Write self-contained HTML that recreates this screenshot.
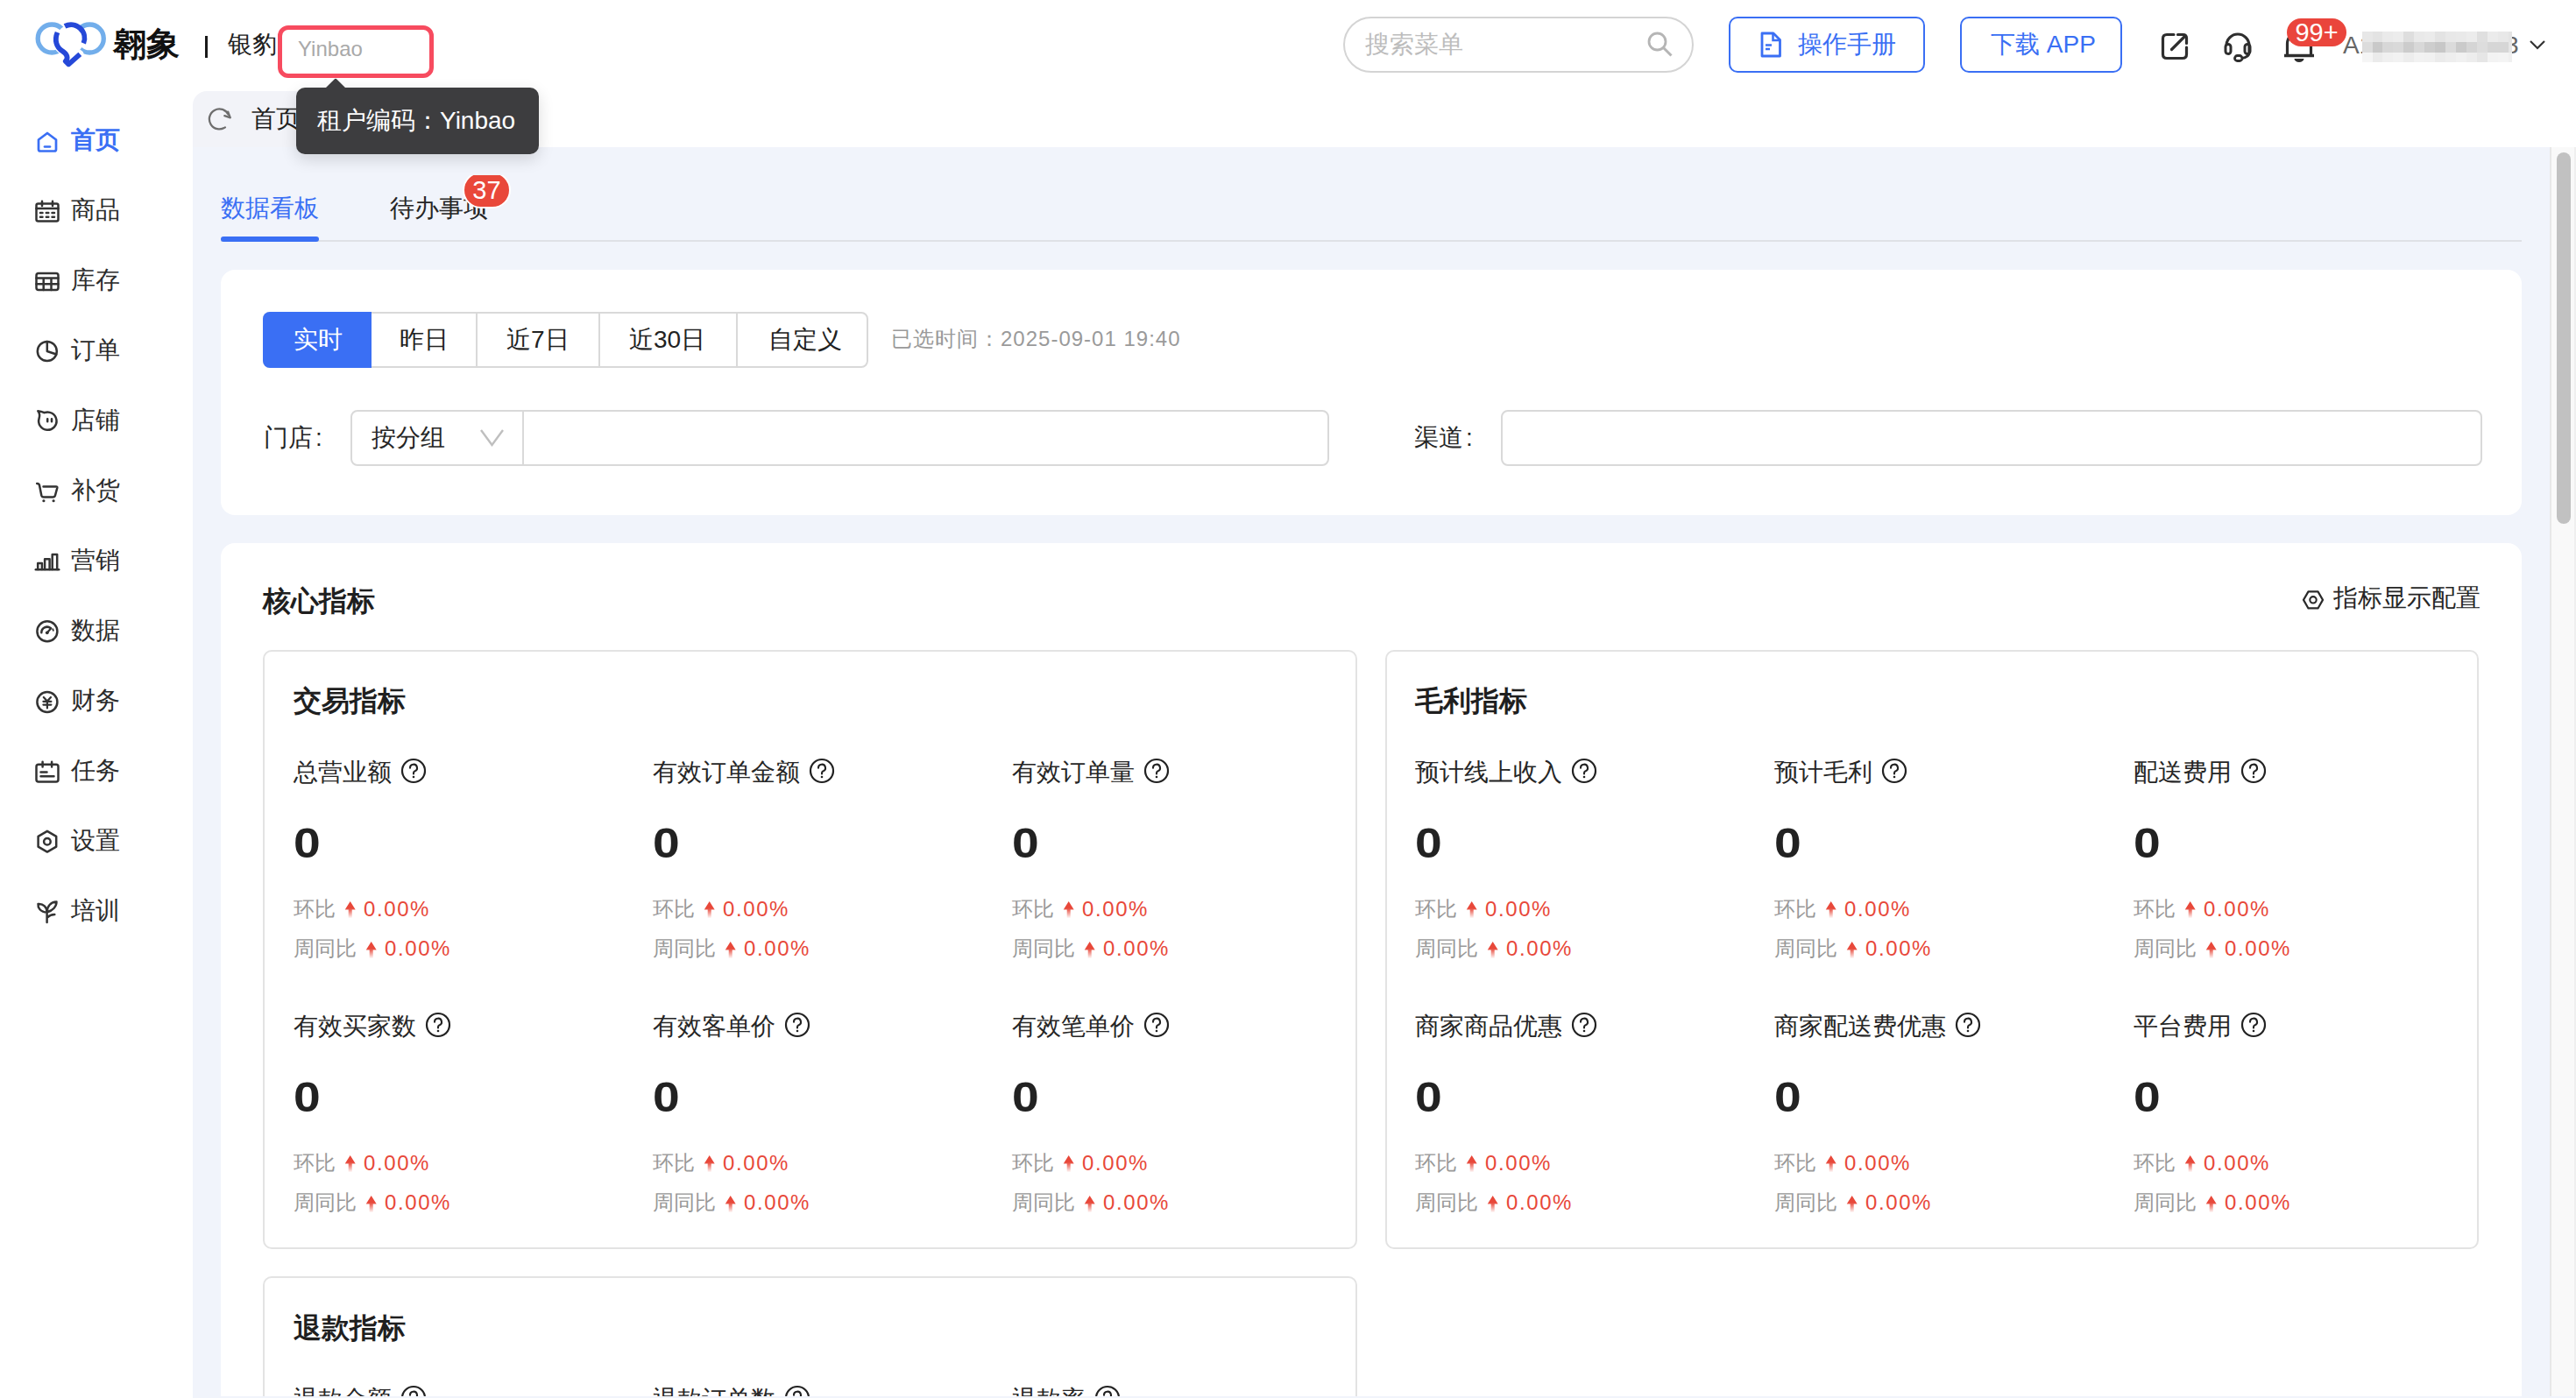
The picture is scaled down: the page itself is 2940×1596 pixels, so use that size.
<!DOCTYPE html>
<html><head><meta charset="utf-8">
<style>
*{box-sizing:border-box;margin:0;padding:0}
html,body{width:2940px;height:1596px;overflow:hidden;background:#fff;font-family:"Liberation Sans",sans-serif;color:#222}
.a{position:absolute;white-space:nowrap}
svg{position:absolute;overflow:visible}
/* sidebar */
.nav{position:absolute;left:0;width:220px;height:80px}
.nav .t{position:absolute;left:81px;top:0;font-size:28px;line-height:52px;color:#2b2b2b}
.nav svg{left:41px}
/* metric */
.lbl{font-size:28px;color:#262626;line-height:40px}
.val{font-size:48px;font-weight:700;color:#222;line-height:56px}
.cmp{font-size:24px;color:#999;line-height:30px}
.pct{color:#e8483a;letter-spacing:1.6px}
</style></head>
<body>
<!-- sidebar background -->
<div class="a" style="left:0;top:104px;width:220px;height:1492px;background:#fff"></div>
<!-- content bg -->
<div class="a" style="left:220px;top:168px;width:2691px;height:1428px;background:#f1f4fb"></div>
<!-- page tab strip -->
<div class="a" style="left:220px;top:104px;width:188px;height:64px;background:#f2f3f8;border-radius:16px 0 0 0"></div>

<!-- header -->
<svg style="left:36px;top:20px" width="90" height="60" viewBox="0 0 90 60">
  <circle cx="23.2" cy="24" r="16" fill="none" stroke="#72aeeb" stroke-width="5.3"/>
  <circle cx="66.3" cy="24" r="16" fill="none" stroke="#72aeeb" stroke-width="5.3"/>
  <circle cx="44.6" cy="24.4" r="16.2" fill="#fff"/>
  <path d="M27.5 20 C26.5 28 29 34 35.5 38.5 C41 42 42 46.5 38.8 50 L42.3 53.3 L55.3 41.8 Z" fill="#fff" stroke="#fff" stroke-width="8.5" stroke-linejoin="round"/>
  <path d="M38 9.9 A15.4 15.4 0 0 1 59.3 29.4" fill="none" stroke="#2548d8" stroke-width="5.8"/>
  <path d="M29.5 17 C26 25.5 28 34 35.5 38.5 C41 42 42 46.5 38.8 50 L42.3 53.3 L55.3 41.8" fill="none" stroke="#2548d8" stroke-width="5.8" stroke-linejoin="round"/>
</svg>
<div class="a" style="left:129px;top:24px;font-size:38px;font-weight:700;line-height:52px;color:#111">翱象</div>
<div class="a" style="left:234px;top:41px;width:3px;height:25px;background:#1a1a1a"></div>
<div class="a" style="left:260px;top:31px;font-size:28px;line-height:40px;color:#222">银豹</div>
<div class="a" style="left:317px;top:29px;width:178px;height:60px;border:5.5px solid #f74b5f;border-radius:12px;background:#fff"></div>
<div class="a" style="left:340px;top:38px;font-size:24px;line-height:36px;color:#a9a9a9">Yinbao</div>

<!-- search -->
<div class="a" style="left:1533px;top:19px;width:400px;height:64px;border:2px solid #d4d4d4;border-radius:32px"></div>
<div class="a" style="left:1558px;top:31px;font-size:28px;line-height:40px;color:#bdbdbd">搜索菜单</div>
<svg style="left:1880px;top:36px" width="30" height="30" viewBox="0 0 30 30"><circle cx="11.5" cy="11.5" r="9.5" fill="none" stroke="#b5b5b5" stroke-width="2.8"/><path d="M18.5 18.5 L27.5 27.5" stroke="#b5b5b5" stroke-width="3" stroke-linecap="butt"/></svg>

<!-- buttons -->
<div class="a" style="left:1973px;top:19px;width:224px;height:64px;border:2.5px solid #3a6ff4;border-radius:10px"></div>
<svg style="left:2009px;top:36px" width="24" height="30" viewBox="0 0 24 30"><path d="M2 2 H15 L22.5 9.5 V28 H2 Z" fill="none" stroke="#3a6ff4" stroke-width="2.8" stroke-linejoin="round"/><path d="M14.5 2 V10 H22.5" fill="none" stroke="#3a6ff4" stroke-width="2.5"/><path d="M6 15.5 H13 M6 20 H11" stroke="#3a6ff4" stroke-width="2.5"/></svg>
<div class="a" style="left:2052px;top:31px;font-size:28px;line-height:40px;color:#3a6ff4">操作手册</div>
<div class="a" style="left:2237px;top:19px;width:185px;height:64px;border:2.5px solid #3a6ff4;border-radius:10px"></div>
<div class="a" style="left:2272px;top:31px;font-size:28px;line-height:40px;color:#3a6ff4">下载 APP</div>

<!-- icons -->
<svg style="left:2466px;top:37px" width="32" height="32" viewBox="0 0 32 32"><path d="M15 2.5 H7 Q2.5 2.5 2.5 7 V25 Q2.5 29.5 7 29.5 H25 Q29.5 29.5 29.5 25 V17" fill="none" stroke="#2e2e2e" stroke-width="3.2" stroke-linecap="round"/><path d="M19.5 2.5 H25.5 Q29.5 2.5 29.5 6.5 V12.5" fill="none" stroke="#2e2e2e" stroke-width="3.2" stroke-linecap="round"/><path d="M12.5 19.5 L28 4" stroke="#2e2e2e" stroke-width="3.2" stroke-linecap="round"/></svg>
<svg style="left:2538px;top:35px" width="32" height="36" viewBox="0 0 32 36"><path d="M3 17 A13 13 0 0 1 29 17 V25" fill="none" stroke="#2e2e2e" stroke-width="3.2"/><rect x="2" y="15.5" width="6" height="11" rx="3" fill="none" stroke="#2e2e2e" stroke-width="3"/><rect x="24" y="15.5" width="6" height="11" rx="3" fill="none" stroke="#2e2e2e" stroke-width="3"/><path d="M29 25 Q29 30.5 20 31.5" fill="none" stroke="#2e2e2e" stroke-width="3"/><rect x="12.5" y="28.5" width="8.5" height="6" rx="3" fill="none" stroke="#2e2e2e" stroke-width="2.8"/></svg>
<svg style="left:2606px;top:36px" width="36" height="34" viewBox="0 0 36 34"><path d="M4.5 28 V14 A13.5 13.5 0 0 1 31.5 14 V28" fill="none" stroke="#2e2e2e" stroke-width="3.2"/><path d="M1 27.5 H35" stroke="#2e2e2e" stroke-width="3.4"/><path d="M12.5 31 A5.5 4 0 0 0 23.5 31 Z" fill="#2e2e2e"/></svg>
<div class="a" style="left:2610px;top:21px;width:68px;height:32px;border-radius:16px;background:#ea453c;color:#fff;font-size:29px;line-height:32px;text-align:center;letter-spacing:0px">99+</div>
<div class="a" style="left:2674px;top:32px;font-size:28px;line-height:40px;color:#666">A1</div>
<div class="a" style="left:2859px;top:32px;font-size:28px;line-height:40px;color:#666">3</div>
<div class="a" style="left:0;top:0"><div class="a" style="left:2696px;top:36px;width:12px;height:12px;background:#e7e7e7"></div><div class="a" style="left:2708px;top:36px;width:11px;height:12px;background:#e3e3e3"></div><div class="a" style="left:2719px;top:36px;width:12px;height:12px;background:#eaeaea"></div><div class="a" style="left:2731px;top:36px;width:12px;height:12px;background:#ececec"></div><div class="a" style="left:2743px;top:36px;width:12px;height:12px;background:#dedede"></div><div class="a" style="left:2755px;top:36px;width:12px;height:12px;background:#e9e9e9"></div><div class="a" style="left:2767px;top:36px;width:12px;height:12px;background:#ebebeb"></div><div class="a" style="left:2779px;top:36px;width:12px;height:12px;background:#e3e3e3"></div><div class="a" style="left:2791px;top:36px;width:12px;height:12px;background:#e8e8e8"></div><div class="a" style="left:2803px;top:36px;width:12px;height:12px;background:#e9e9e9"></div><div class="a" style="left:2815px;top:36px;width:12px;height:12px;background:#ececec"></div><div class="a" style="left:2827px;top:36px;width:12px;height:12px;background:#dfdfdf"></div><div class="a" style="left:2839px;top:36px;width:12px;height:12px;background:#ebebeb"></div><div class="a" style="left:2851px;top:36px;width:12px;height:12px;background:#e8e8e8"></div><div class="a" style="left:2863px;top:36px;width:4px;height:12px;background:#e4e4e4"></div><div class="a" style="left:2696px;top:48px;width:12px;height:12px;background:#dcdcdc"></div><div class="a" style="left:2708px;top:48px;width:11px;height:12px;background:#c9c9c9"></div><div class="a" style="left:2719px;top:48px;width:12px;height:12px;background:#d7d7d7"></div><div class="a" style="left:2731px;top:48px;width:12px;height:12px;background:#d9d9d9"></div><div class="a" style="left:2743px;top:48px;width:12px;height:12px;background:#cccccc"></div><div class="a" style="left:2755px;top:48px;width:12px;height:12px;background:#d8d8d8"></div><div class="a" style="left:2767px;top:48px;width:12px;height:12px;background:#cdcdcd"></div><div class="a" style="left:2779px;top:48px;width:12px;height:12px;background:#c7c7c7"></div><div class="a" style="left:2791px;top:48px;width:12px;height:12px;background:#dbdbdb"></div><div class="a" style="left:2803px;top:48px;width:12px;height:12px;background:#cacaca"></div><div class="a" style="left:2815px;top:48px;width:12px;height:12px;background:#d5d5d5"></div><div class="a" style="left:2827px;top:48px;width:12px;height:12px;background:#dddddd"></div><div class="a" style="left:2839px;top:48px;width:12px;height:12px;background:#d6d6d6"></div><div class="a" style="left:2851px;top:48px;width:12px;height:12px;background:#d6d6d6"></div><div class="a" style="left:2863px;top:48px;width:4px;height:12px;background:#e6e6e6"></div><div class="a" style="left:2696px;top:60px;width:12px;height:11px;background:#f5f5f5"></div><div class="a" style="left:2708px;top:60px;width:11px;height:11px;background:#ebebeb"></div><div class="a" style="left:2719px;top:60px;width:12px;height:11px;background:#f0f0f0"></div><div class="a" style="left:2731px;top:60px;width:12px;height:11px;background:#f2f2f2"></div><div class="a" style="left:2743px;top:60px;width:12px;height:11px;background:#ededed"></div><div class="a" style="left:2755px;top:60px;width:12px;height:11px;background:#f2f2f2"></div><div class="a" style="left:2767px;top:60px;width:12px;height:11px;background:#f1f1f1"></div><div class="a" style="left:2779px;top:60px;width:12px;height:11px;background:#ebebeb"></div><div class="a" style="left:2791px;top:60px;width:12px;height:11px;background:#eeeeee"></div><div class="a" style="left:2803px;top:60px;width:12px;height:11px;background:#f1f1f1"></div><div class="a" style="left:2815px;top:60px;width:12px;height:11px;background:#ededed"></div><div class="a" style="left:2827px;top:60px;width:12px;height:11px;background:#e6e6e6"></div><div class="a" style="left:2839px;top:60px;width:12px;height:11px;background:#f3f3f3"></div><div class="a" style="left:2851px;top:60px;width:12px;height:11px;background:#f4f4f4"></div><div class="a" style="left:2863px;top:60px;width:4px;height:11px;background:#f0f0f0"></div></div>

<svg style="left:2886px;top:45px" width="20" height="12" viewBox="0 0 20 12"><path d="M2 2 L10 10 L18 2" fill="none" stroke="#333" stroke-width="2.2"/></svg>

<!-- sidebar -->
<div class="a" style="left:81px;top:140px;font-size:28px;line-height:40px;color:#3a6ff4;font-weight:600;">首页</div>
<div class="a" style="left:81px;top:220px;font-size:28px;line-height:40px;color:#2b2b2b;">商品</div>
<div class="a" style="left:81px;top:300px;font-size:28px;line-height:40px;color:#2b2b2b;">库存</div>
<div class="a" style="left:81px;top:380px;font-size:28px;line-height:40px;color:#2b2b2b;">订单</div>
<div class="a" style="left:81px;top:460px;font-size:28px;line-height:40px;color:#2b2b2b;">店铺</div>
<div class="a" style="left:81px;top:540px;font-size:28px;line-height:40px;color:#2b2b2b;">补货</div>
<div class="a" style="left:81px;top:620px;font-size:28px;line-height:40px;color:#2b2b2b;">营销</div>
<div class="a" style="left:81px;top:700px;font-size:28px;line-height:40px;color:#2b2b2b;">数据</div>
<div class="a" style="left:81px;top:780px;font-size:28px;line-height:40px;color:#2b2b2b;">财务</div>
<div class="a" style="left:81px;top:860px;font-size:28px;line-height:40px;color:#2b2b2b;">任务</div>
<div class="a" style="left:81px;top:940px;font-size:28px;line-height:40px;color:#2b2b2b;">设置</div>
<div class="a" style="left:81px;top:1020px;font-size:28px;line-height:40px;color:#2b2b2b;">培训</div>
<svg style="left:0;top:0" width="220" height="1100" viewBox="0 0 220 1100">
<g fill="none" stroke="#3a6ff4" stroke-width="2.7" stroke-linejoin="round" stroke-linecap="round">
 <path d="M44 159.5 L54 152 L64 159.5 V170.5 Q64 172.5 62 172.5 H46 Q44 172.5 44 170.5 Z"/>
 <path d="M51 167.5 H57"/>
</g>
<g fill="none" stroke="#333" stroke-width="2.5" stroke-linejoin="round" stroke-linecap="round">
 <rect x="41.5" y="232.5" width="25" height="20" rx="2"/>
 <path d="M41.5 238 H66.5 M48 229.8 V235 M60 229.8 V235"/>
 <path d="M46 243 H48.5 M52.8 243 H55.3 M59.5 243 H62 M46 247.7 H48.5 M52.8 247.7 H55.3 M59.5 247.7 H62"/>
 <rect x="41.5" y="312" width="25" height="19" rx="2.5"/>
 <path d="M41.5 317.5 H66.5 M41.5 324.3 H66.5 M49.7 317.5 V331 M58.5 317.5 V331"/>
 <circle cx="53.8" cy="401" r="11"/>
 <path d="M53.8 390 V401 L64.3 404.5"/>
 <path d="M50.5 471.2 A10.2 10.2 0 1 1 44.6 477.6 C45.6 474.6 45.2 471.6 43.3 469.2 Q47 469.4 50.5 471.2 Z"/>
 <path d="M54.2 478.2 V481.2 M59 478.2 V481.2"/>
 <path d="M42.2 552 Q44.6 552 45 554 L47.3 565.5 Q47.8 567.5 49.8 567.5 H60.5 Q62.5 567.5 63 565.5 L65.3 557 Q65.6 555.5 64 555.5 H49.5"/>
 <path d="M49.8 571.8 H50 M61 571.8 H61.2" stroke-width="3"/>
 <path d="M40.8 650.2 H67.2"/>
 <path d="M43.2 650 V643 H47.9 V650 M51.1 650 V638.2 H56.6 V650 M59.7 650 V633 H65.2 V650"/>
 <circle cx="53.9" cy="720.8" r="11.5"/>
 <path d="M47.3 722.3 A6.6 6.6 0 0 1 57.7 716.9"/>
 <path d="M53.8 722.3 L58.3 717.3" stroke-width="2.2"/>
 <circle cx="53.8" cy="722.3" r="1.9" fill="#333" stroke="none"/>
 <path d="M60.2 718.2 L60.9 719.8" stroke-width="1.8"/>
 <circle cx="53.9" cy="801.4" r="11.5"/>
 <path d="M49.8 796 L53.9 800.6 L58 796 M49.4 800.8 H58.4 M49.4 804.6 H58.4 M53.9 800.6 V808.5" stroke-width="2.2"/>
 <rect x="41.5" y="872.8" width="25" height="19.8" rx="2.5"/>
 <path d="M48.6 869.8 V875.5 M59.1 869.8 V875.5 M46.5 881.4 H53.5 M46.5 886.3 H61.5"/>
 <path d="M53.9 948.8 L64.2 954.8 V966.6 L53.9 972.6 L43.6 966.6 V954.8 Z"/>
 <circle cx="53.9" cy="960.7" r="3.8"/>
 <path d="M53.6 1053 V1041.5 M53.6 1041.5 C46 1041.5 43 1036 43.5 1032 C49.5 1031.5 53.6 1035.5 53.6 1041.5 M53.6 1041.5 C53.6 1034.5 58 1029.8 64.5 1029.5 C64.5 1035 60 1039.5 53.6 1041.5 M54.5 1047 C56.5 1045 59 1044.2 62.3 1044"/>
</g>
</svg>

<!-- breadcrumb tab -->
<svg style="left:236px;top:122px" width="30" height="28" viewBox="0 0 30 28"><path d="M24.6 8.6 A11.5 11.5 0 1 0 20.9 23.4" fill="none" stroke="#6e6e6e" stroke-width="2.3" stroke-linecap="round"/><path d="M24.2 5.6 L26.8 12.3 L20.3 10.2" fill="none" stroke="#6e6e6e" stroke-width="2.3" stroke-linecap="round" stroke-linejoin="round"/></svg>
<div class="a" style="left:287px;top:116px;font-size:28px;line-height:40px;color:#1f1f1f;font-weight:500">首页</div>

<!-- tabs -->
<div class="a" style="left:252px;top:274px;width:2626px;height:2px;background:#dfe1e6"></div>
<div class="a" style="left:252px;top:218px;font-size:28px;line-height:40px;color:#3a6ff4">数据看板</div>
<div class="a" style="left:252px;top:270px;width:112px;height:6px;border-radius:3px;background:#3a6ff4"></div>
<div class="a" style="left:445px;top:218px;font-size:28px;line-height:40px;color:#262626">待办事项</div>
<div class="a" style="left:520px;top:200px;width:80px;height:50px;overflow:hidden"><div class="a" style="left:8px;top:-4px;width:55px;height:42px;border-radius:21px;background:#e9483a;border:2.5px solid #fff;color:#fff;font-size:29px;line-height:38px;text-align:center">37</div></div>

<!-- filter card -->
<div class="a" style="left:252px;top:308px;width:2626px;height:280px;background:#fff;border-radius:16px"></div>
<div class="a" style="left:300px;top:356px;width:691px;height:64px;border:2px solid #d9d9d9;border-radius:8px"></div>
<div class="a" style="left:300px;top:356px;width:124px;height:64px;background:#3a6ff4;border-radius:8px 0 0 8px"></div>
<div class="a" style="left:543px;top:358px;width:2px;height:60px;background:#d9d9d9"></div>
<div class="a" style="left:683px;top:358px;width:2px;height:60px;background:#d9d9d9"></div>
<div class="a" style="left:840px;top:358px;width:2px;height:60px;background:#d9d9d9"></div>
<div class="a" style="left:335px;top:368px;font-size:28px;line-height:40px;color:#fff">实时</div>
<div class="a" style="left:456px;top:368px;font-size:28px;line-height:40px;color:#222">昨日</div>
<div class="a" style="left:578px;top:368px;font-size:28px;line-height:40px;color:#222">近7日</div>
<div class="a" style="left:718px;top:368px;font-size:28px;line-height:40px;color:#222">近30日</div>
<div class="a" style="left:877px;top:368px;font-size:28px;line-height:40px;color:#222">自定义</div>
<div class="a" style="left:1017px;top:370px;font-size:24px;line-height:34px;color:#9a9a9a;letter-spacing:1px">已选时间：2025-09-01 19:40</div>

<div class="a" style="left:301px;top:480px;font-size:28px;line-height:40px;color:#262626">门店<span style="margin-left:3px">:</span></div>
<div class="a" style="left:400px;top:468px;width:1117px;height:64px;border:2px solid #d9d9d9;border-radius:8px"></div>
<div class="a" style="left:596px;top:470px;width:2px;height:60px;background:#d9d9d9"></div>
<div class="a" style="left:424px;top:480px;font-size:28px;line-height:40px;color:#262626">按分组</div>
<svg style="left:546px;top:488px" width="32" height="24" viewBox="0 0 32 24"><path d="M3 3 L15.5 20 L28 3" fill="none" stroke="#bfbfbf" stroke-width="2.4"/></svg>
<div class="a" style="left:1614px;top:480px;font-size:28px;line-height:40px;color:#262626">渠道<span style="margin-left:3px">:</span></div>
<div class="a" style="left:1713px;top:468px;width:1120px;height:64px;border:2px solid #d9d9d9;border-radius:8px"></div>

<!-- core metrics card -->
<div class="a" style="left:252px;top:620px;width:2626px;height:1000px;background:#fff;border-radius:16px"></div>
<div class="a" style="left:300px;top:664px;font-size:32px;line-height:44px;color:#1f1f1f;font-weight:600">核心指标</div>
<svg style="left:2626px;top:670px" width="28" height="30" viewBox="0 0 28 30"><path d="M25.00 14.90 L19.50 24.43 L8.50 24.43 L3.00 14.90 L8.50 5.37 L19.50 5.37 Z" fill="none" stroke="#2a2a2a" stroke-width="2.2" stroke-linejoin="round"/><circle cx="14" cy="14.8" r="3.7" fill="none" stroke="#2a2a2a" stroke-width="2.1"/></svg>
<div class="a" style="left:2663px;top:663px;font-size:28px;line-height:40px;color:#262626">指标显示配置</div>

<div class="a" style="left:300px;top:742px;width:1249px;height:684px;border:2px solid #e3e3e3;border-radius:10px"></div>
<div class="a" style="left:1581px;top:742px;width:1248px;height:684px;border:2px solid #e3e3e3;border-radius:10px"></div>
<div class="a" style="left:300px;top:1457px;width:1249px;height:400px;border:2px solid #e3e3e3;border-radius:10px"></div>
<div class="a" style="left:335px;top:778px;font-size:32px;line-height:44px;color:#1f1f1f;font-weight:600">交易指标</div>
<div class="a" style="left:1615px;top:778px;font-size:32px;line-height:44px;color:#1f1f1f;font-weight:600">毛利指标</div>
<div class="a" style="left:335px;top:1494px;font-size:32px;line-height:44px;color:#1f1f1f;font-weight:600">退款指标</div>

<!-- metrics -->
<svg width="0" height="0" style="position:absolute"><defs><linearGradient id="ag" x1="0" y1="0" x2="0" y2="1"><stop offset="0.4" stop-color="#e8483a"/><stop offset="0.5" stop-color="#e8483a" stop-opacity="0.85"/><stop offset="1" stop-color="#e8483a" stop-opacity="0"/></linearGradient></defs></svg>
<div class="a lbl" style="left:335px;top:862px">总营业额</div><svg style="left:457px;top:865px" width="30" height="30" viewBox="0 0 30 30"><circle cx="15" cy="15" r="13" fill="none" stroke="#222" stroke-width="2.2"/><path d="M11 11.8 A4 4 0 1 1 16.2 15.5 Q15 16 15 17.5 V18.5" fill="none" stroke="#222" stroke-width="2.1" stroke-linecap="round"/><circle cx="15" cy="22" r="1.3" fill="#222"/></svg><div class="a val" style="left:335px;top:935px;transform:scaleX(1.15);transform-origin:0 0">0</div><div class="a cmp" style="left:335px;top:1022.6px">环比</div><svg style="left:393px;top:1029px" width="14" height="20" viewBox="0 0 14 20"><path d="M6.7 0 L12.7 9.6 H8.7 V19.4 H4.7 V9.6 H0.7 Z" fill="url(#ag)"/></svg><div class="a cmp pct" style="left:415px;top:1022.6px">0.00%</div><div class="a cmp" style="left:335px;top:1068px">周同比</div><svg style="left:417px;top:1075px" width="14" height="20" viewBox="0 0 14 20"><path d="M6.7 0 L12.7 9.6 H8.7 V19.4 H4.7 V9.6 H0.7 Z" fill="url(#ag)"/></svg><div class="a cmp pct" style="left:439px;top:1068px">0.00%</div>
<div class="a lbl" style="left:745px;top:862px">有效订单金额</div><svg style="left:923px;top:865px" width="30" height="30" viewBox="0 0 30 30"><circle cx="15" cy="15" r="13" fill="none" stroke="#222" stroke-width="2.2"/><path d="M11 11.8 A4 4 0 1 1 16.2 15.5 Q15 16 15 17.5 V18.5" fill="none" stroke="#222" stroke-width="2.1" stroke-linecap="round"/><circle cx="15" cy="22" r="1.3" fill="#222"/></svg><div class="a val" style="left:745px;top:935px;transform:scaleX(1.15);transform-origin:0 0">0</div><div class="a cmp" style="left:745px;top:1022.6px">环比</div><svg style="left:803px;top:1029px" width="14" height="20" viewBox="0 0 14 20"><path d="M6.7 0 L12.7 9.6 H8.7 V19.4 H4.7 V9.6 H0.7 Z" fill="url(#ag)"/></svg><div class="a cmp pct" style="left:825px;top:1022.6px">0.00%</div><div class="a cmp" style="left:745px;top:1068px">周同比</div><svg style="left:827px;top:1075px" width="14" height="20" viewBox="0 0 14 20"><path d="M6.7 0 L12.7 9.6 H8.7 V19.4 H4.7 V9.6 H0.7 Z" fill="url(#ag)"/></svg><div class="a cmp pct" style="left:849px;top:1068px">0.00%</div>
<div class="a lbl" style="left:1155px;top:862px">有效订单量</div><svg style="left:1305px;top:865px" width="30" height="30" viewBox="0 0 30 30"><circle cx="15" cy="15" r="13" fill="none" stroke="#222" stroke-width="2.2"/><path d="M11 11.8 A4 4 0 1 1 16.2 15.5 Q15 16 15 17.5 V18.5" fill="none" stroke="#222" stroke-width="2.1" stroke-linecap="round"/><circle cx="15" cy="22" r="1.3" fill="#222"/></svg><div class="a val" style="left:1155px;top:935px;transform:scaleX(1.15);transform-origin:0 0">0</div><div class="a cmp" style="left:1155px;top:1022.6px">环比</div><svg style="left:1213px;top:1029px" width="14" height="20" viewBox="0 0 14 20"><path d="M6.7 0 L12.7 9.6 H8.7 V19.4 H4.7 V9.6 H0.7 Z" fill="url(#ag)"/></svg><div class="a cmp pct" style="left:1235px;top:1022.6px">0.00%</div><div class="a cmp" style="left:1155px;top:1068px">周同比</div><svg style="left:1237px;top:1075px" width="14" height="20" viewBox="0 0 14 20"><path d="M6.7 0 L12.7 9.6 H8.7 V19.4 H4.7 V9.6 H0.7 Z" fill="url(#ag)"/></svg><div class="a cmp pct" style="left:1259px;top:1068px">0.00%</div>
<div class="a lbl" style="left:1615px;top:862px">预计线上收入</div><svg style="left:1793px;top:865px" width="30" height="30" viewBox="0 0 30 30"><circle cx="15" cy="15" r="13" fill="none" stroke="#222" stroke-width="2.2"/><path d="M11 11.8 A4 4 0 1 1 16.2 15.5 Q15 16 15 17.5 V18.5" fill="none" stroke="#222" stroke-width="2.1" stroke-linecap="round"/><circle cx="15" cy="22" r="1.3" fill="#222"/></svg><div class="a val" style="left:1615px;top:935px;transform:scaleX(1.15);transform-origin:0 0">0</div><div class="a cmp" style="left:1615px;top:1022.6px">环比</div><svg style="left:1673px;top:1029px" width="14" height="20" viewBox="0 0 14 20"><path d="M6.7 0 L12.7 9.6 H8.7 V19.4 H4.7 V9.6 H0.7 Z" fill="url(#ag)"/></svg><div class="a cmp pct" style="left:1695px;top:1022.6px">0.00%</div><div class="a cmp" style="left:1615px;top:1068px">周同比</div><svg style="left:1697px;top:1075px" width="14" height="20" viewBox="0 0 14 20"><path d="M6.7 0 L12.7 9.6 H8.7 V19.4 H4.7 V9.6 H0.7 Z" fill="url(#ag)"/></svg><div class="a cmp pct" style="left:1719px;top:1068px">0.00%</div>
<div class="a lbl" style="left:2025px;top:862px">预计毛利</div><svg style="left:2147px;top:865px" width="30" height="30" viewBox="0 0 30 30"><circle cx="15" cy="15" r="13" fill="none" stroke="#222" stroke-width="2.2"/><path d="M11 11.8 A4 4 0 1 1 16.2 15.5 Q15 16 15 17.5 V18.5" fill="none" stroke="#222" stroke-width="2.1" stroke-linecap="round"/><circle cx="15" cy="22" r="1.3" fill="#222"/></svg><div class="a val" style="left:2025px;top:935px;transform:scaleX(1.15);transform-origin:0 0">0</div><div class="a cmp" style="left:2025px;top:1022.6px">环比</div><svg style="left:2083px;top:1029px" width="14" height="20" viewBox="0 0 14 20"><path d="M6.7 0 L12.7 9.6 H8.7 V19.4 H4.7 V9.6 H0.7 Z" fill="url(#ag)"/></svg><div class="a cmp pct" style="left:2105px;top:1022.6px">0.00%</div><div class="a cmp" style="left:2025px;top:1068px">周同比</div><svg style="left:2107px;top:1075px" width="14" height="20" viewBox="0 0 14 20"><path d="M6.7 0 L12.7 9.6 H8.7 V19.4 H4.7 V9.6 H0.7 Z" fill="url(#ag)"/></svg><div class="a cmp pct" style="left:2129px;top:1068px">0.00%</div>
<div class="a lbl" style="left:2435px;top:862px">配送费用</div><svg style="left:2557px;top:865px" width="30" height="30" viewBox="0 0 30 30"><circle cx="15" cy="15" r="13" fill="none" stroke="#222" stroke-width="2.2"/><path d="M11 11.8 A4 4 0 1 1 16.2 15.5 Q15 16 15 17.5 V18.5" fill="none" stroke="#222" stroke-width="2.1" stroke-linecap="round"/><circle cx="15" cy="22" r="1.3" fill="#222"/></svg><div class="a val" style="left:2435px;top:935px;transform:scaleX(1.15);transform-origin:0 0">0</div><div class="a cmp" style="left:2435px;top:1022.6px">环比</div><svg style="left:2493px;top:1029px" width="14" height="20" viewBox="0 0 14 20"><path d="M6.7 0 L12.7 9.6 H8.7 V19.4 H4.7 V9.6 H0.7 Z" fill="url(#ag)"/></svg><div class="a cmp pct" style="left:2515px;top:1022.6px">0.00%</div><div class="a cmp" style="left:2435px;top:1068px">周同比</div><svg style="left:2517px;top:1075px" width="14" height="20" viewBox="0 0 14 20"><path d="M6.7 0 L12.7 9.6 H8.7 V19.4 H4.7 V9.6 H0.7 Z" fill="url(#ag)"/></svg><div class="a cmp pct" style="left:2539px;top:1068px">0.00%</div>
<div class="a lbl" style="left:335px;top:1152px">有效买家数</div><svg style="left:485px;top:1155px" width="30" height="30" viewBox="0 0 30 30"><circle cx="15" cy="15" r="13" fill="none" stroke="#222" stroke-width="2.2"/><path d="M11 11.8 A4 4 0 1 1 16.2 15.5 Q15 16 15 17.5 V18.5" fill="none" stroke="#222" stroke-width="2.1" stroke-linecap="round"/><circle cx="15" cy="22" r="1.3" fill="#222"/></svg><div class="a val" style="left:335px;top:1225px;transform:scaleX(1.15);transform-origin:0 0">0</div><div class="a cmp" style="left:335px;top:1312.6px">环比</div><svg style="left:393px;top:1319px" width="14" height="20" viewBox="0 0 14 20"><path d="M6.7 0 L12.7 9.6 H8.7 V19.4 H4.7 V9.6 H0.7 Z" fill="url(#ag)"/></svg><div class="a cmp pct" style="left:415px;top:1312.6px">0.00%</div><div class="a cmp" style="left:335px;top:1358px">周同比</div><svg style="left:417px;top:1365px" width="14" height="20" viewBox="0 0 14 20"><path d="M6.7 0 L12.7 9.6 H8.7 V19.4 H4.7 V9.6 H0.7 Z" fill="url(#ag)"/></svg><div class="a cmp pct" style="left:439px;top:1358px">0.00%</div>
<div class="a lbl" style="left:745px;top:1152px">有效客单价</div><svg style="left:895px;top:1155px" width="30" height="30" viewBox="0 0 30 30"><circle cx="15" cy="15" r="13" fill="none" stroke="#222" stroke-width="2.2"/><path d="M11 11.8 A4 4 0 1 1 16.2 15.5 Q15 16 15 17.5 V18.5" fill="none" stroke="#222" stroke-width="2.1" stroke-linecap="round"/><circle cx="15" cy="22" r="1.3" fill="#222"/></svg><div class="a val" style="left:745px;top:1225px;transform:scaleX(1.15);transform-origin:0 0">0</div><div class="a cmp" style="left:745px;top:1312.6px">环比</div><svg style="left:803px;top:1319px" width="14" height="20" viewBox="0 0 14 20"><path d="M6.7 0 L12.7 9.6 H8.7 V19.4 H4.7 V9.6 H0.7 Z" fill="url(#ag)"/></svg><div class="a cmp pct" style="left:825px;top:1312.6px">0.00%</div><div class="a cmp" style="left:745px;top:1358px">周同比</div><svg style="left:827px;top:1365px" width="14" height="20" viewBox="0 0 14 20"><path d="M6.7 0 L12.7 9.6 H8.7 V19.4 H4.7 V9.6 H0.7 Z" fill="url(#ag)"/></svg><div class="a cmp pct" style="left:849px;top:1358px">0.00%</div>
<div class="a lbl" style="left:1155px;top:1152px">有效笔单价</div><svg style="left:1305px;top:1155px" width="30" height="30" viewBox="0 0 30 30"><circle cx="15" cy="15" r="13" fill="none" stroke="#222" stroke-width="2.2"/><path d="M11 11.8 A4 4 0 1 1 16.2 15.5 Q15 16 15 17.5 V18.5" fill="none" stroke="#222" stroke-width="2.1" stroke-linecap="round"/><circle cx="15" cy="22" r="1.3" fill="#222"/></svg><div class="a val" style="left:1155px;top:1225px;transform:scaleX(1.15);transform-origin:0 0">0</div><div class="a cmp" style="left:1155px;top:1312.6px">环比</div><svg style="left:1213px;top:1319px" width="14" height="20" viewBox="0 0 14 20"><path d="M6.7 0 L12.7 9.6 H8.7 V19.4 H4.7 V9.6 H0.7 Z" fill="url(#ag)"/></svg><div class="a cmp pct" style="left:1235px;top:1312.6px">0.00%</div><div class="a cmp" style="left:1155px;top:1358px">周同比</div><svg style="left:1237px;top:1365px" width="14" height="20" viewBox="0 0 14 20"><path d="M6.7 0 L12.7 9.6 H8.7 V19.4 H4.7 V9.6 H0.7 Z" fill="url(#ag)"/></svg><div class="a cmp pct" style="left:1259px;top:1358px">0.00%</div>
<div class="a lbl" style="left:1615px;top:1152px">商家商品优惠</div><svg style="left:1793px;top:1155px" width="30" height="30" viewBox="0 0 30 30"><circle cx="15" cy="15" r="13" fill="none" stroke="#222" stroke-width="2.2"/><path d="M11 11.8 A4 4 0 1 1 16.2 15.5 Q15 16 15 17.5 V18.5" fill="none" stroke="#222" stroke-width="2.1" stroke-linecap="round"/><circle cx="15" cy="22" r="1.3" fill="#222"/></svg><div class="a val" style="left:1615px;top:1225px;transform:scaleX(1.15);transform-origin:0 0">0</div><div class="a cmp" style="left:1615px;top:1312.6px">环比</div><svg style="left:1673px;top:1319px" width="14" height="20" viewBox="0 0 14 20"><path d="M6.7 0 L12.7 9.6 H8.7 V19.4 H4.7 V9.6 H0.7 Z" fill="url(#ag)"/></svg><div class="a cmp pct" style="left:1695px;top:1312.6px">0.00%</div><div class="a cmp" style="left:1615px;top:1358px">周同比</div><svg style="left:1697px;top:1365px" width="14" height="20" viewBox="0 0 14 20"><path d="M6.7 0 L12.7 9.6 H8.7 V19.4 H4.7 V9.6 H0.7 Z" fill="url(#ag)"/></svg><div class="a cmp pct" style="left:1719px;top:1358px">0.00%</div>
<div class="a lbl" style="left:2025px;top:1152px">商家配送费优惠</div><svg style="left:2231px;top:1155px" width="30" height="30" viewBox="0 0 30 30"><circle cx="15" cy="15" r="13" fill="none" stroke="#222" stroke-width="2.2"/><path d="M11 11.8 A4 4 0 1 1 16.2 15.5 Q15 16 15 17.5 V18.5" fill="none" stroke="#222" stroke-width="2.1" stroke-linecap="round"/><circle cx="15" cy="22" r="1.3" fill="#222"/></svg><div class="a val" style="left:2025px;top:1225px;transform:scaleX(1.15);transform-origin:0 0">0</div><div class="a cmp" style="left:2025px;top:1312.6px">环比</div><svg style="left:2083px;top:1319px" width="14" height="20" viewBox="0 0 14 20"><path d="M6.7 0 L12.7 9.6 H8.7 V19.4 H4.7 V9.6 H0.7 Z" fill="url(#ag)"/></svg><div class="a cmp pct" style="left:2105px;top:1312.6px">0.00%</div><div class="a cmp" style="left:2025px;top:1358px">周同比</div><svg style="left:2107px;top:1365px" width="14" height="20" viewBox="0 0 14 20"><path d="M6.7 0 L12.7 9.6 H8.7 V19.4 H4.7 V9.6 H0.7 Z" fill="url(#ag)"/></svg><div class="a cmp pct" style="left:2129px;top:1358px">0.00%</div>
<div class="a lbl" style="left:2435px;top:1152px">平台费用</div><svg style="left:2557px;top:1155px" width="30" height="30" viewBox="0 0 30 30"><circle cx="15" cy="15" r="13" fill="none" stroke="#222" stroke-width="2.2"/><path d="M11 11.8 A4 4 0 1 1 16.2 15.5 Q15 16 15 17.5 V18.5" fill="none" stroke="#222" stroke-width="2.1" stroke-linecap="round"/><circle cx="15" cy="22" r="1.3" fill="#222"/></svg><div class="a val" style="left:2435px;top:1225px;transform:scaleX(1.15);transform-origin:0 0">0</div><div class="a cmp" style="left:2435px;top:1312.6px">环比</div><svg style="left:2493px;top:1319px" width="14" height="20" viewBox="0 0 14 20"><path d="M6.7 0 L12.7 9.6 H8.7 V19.4 H4.7 V9.6 H0.7 Z" fill="url(#ag)"/></svg><div class="a cmp pct" style="left:2515px;top:1312.6px">0.00%</div><div class="a cmp" style="left:2435px;top:1358px">周同比</div><svg style="left:2517px;top:1365px" width="14" height="20" viewBox="0 0 14 20"><path d="M6.7 0 L12.7 9.6 H8.7 V19.4 H4.7 V9.6 H0.7 Z" fill="url(#ag)"/></svg><div class="a cmp pct" style="left:2539px;top:1358px">0.00%</div>
<div class="a lbl" style="left:335px;top:1578px">退款金额</div><svg style="left:457px;top:1581px" width="30" height="30" viewBox="0 0 30 30"><circle cx="15" cy="15" r="13" fill="none" stroke="#222" stroke-width="2.2"/><path d="M11 11.8 A4 4 0 1 1 16.2 15.5 Q15 16 15 17.5 V18.5" fill="none" stroke="#222" stroke-width="2.1" stroke-linecap="round"/><circle cx="15" cy="22" r="1.3" fill="#222"/></svg>
<div class="a lbl" style="left:745px;top:1578px">退款订单数</div><svg style="left:895px;top:1581px" width="30" height="30" viewBox="0 0 30 30"><circle cx="15" cy="15" r="13" fill="none" stroke="#222" stroke-width="2.2"/><path d="M11 11.8 A4 4 0 1 1 16.2 15.5 Q15 16 15 17.5 V18.5" fill="none" stroke="#222" stroke-width="2.1" stroke-linecap="round"/><circle cx="15" cy="22" r="1.3" fill="#222"/></svg>
<div class="a lbl" style="left:1155px;top:1578px">退款率</div><svg style="left:1249px;top:1581px" width="30" height="30" viewBox="0 0 30 30"><circle cx="15" cy="15" r="13" fill="none" stroke="#222" stroke-width="2.2"/><path d="M11 11.8 A4 4 0 1 1 16.2 15.5 Q15 16 15 17.5 V18.5" fill="none" stroke="#222" stroke-width="2.1" stroke-linecap="round"/><circle cx="15" cy="22" r="1.3" fill="#222"/></svg>

<!-- scrollbar -->
<div class="a" style="left:2910px;top:168px;width:30px;height:1428px;background:#f9f9f9;border-left:2px solid #e8e8e8;border-right:2px solid #efefef"></div>
<div class="a" style="left:2918px;top:174px;width:16px;height:424px;border-radius:8px;background:#c1c1c1"></div>

<div class="a" style="left:220px;top:1594px;width:2720px;height:2px;background:#f1f4fb"></div>
<!-- tooltip -->
<div class="a" style="left:338px;top:100px;width:277px;height:76px;border-radius:10px;background:#3d3d3f;box-shadow:0 6px 18px rgba(0,0,0,0.14)"></div>
<svg style="left:369px;top:88px" width="28" height="14" viewBox="0 0 28 14"><path d="M2 13 L12.6 2.4 Q14 1 15.4 2.4 L26 13 Z" fill="#3d3d3f"/></svg>
<div class="a" style="left:362px;top:118px;font-size:28px;line-height:40px;color:#fff">租户编码：Yinbao</div>

</body></html>
